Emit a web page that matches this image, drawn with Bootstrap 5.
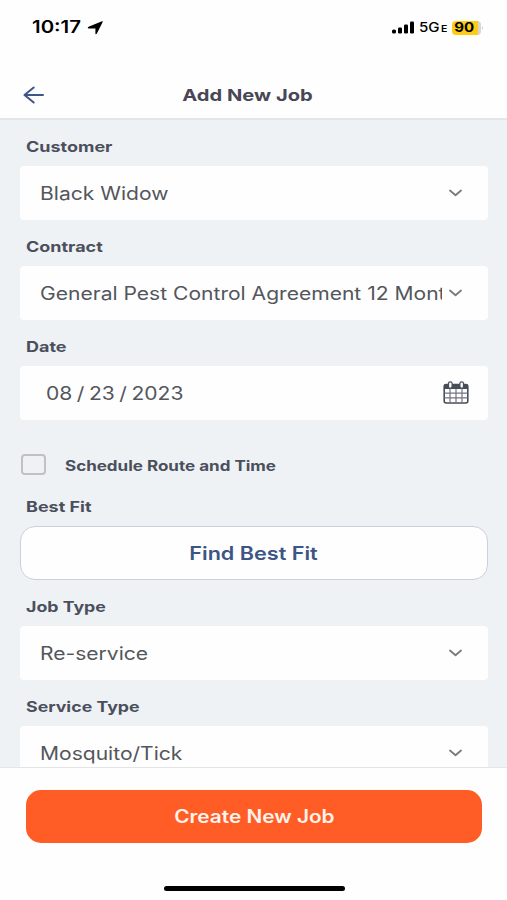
<!DOCTYPE html>
<html lang="en">
<head>
<meta charset="utf-8">
<meta name="viewport" content="width=device-width, initial-scale=1">
<title>Add New Job</title>
<link href="https://cdn.jsdelivr.net/npm/bootstrap@5.3.0/dist/css/bootstrap.min.css" rel="stylesheet">
<style>
  body { font-family: Inter, "Liberation Sans", sans-serif; color: #4b4f5c; height: 900px; background: #fefefe; }
  svg { display: block; flex: none; }
  /* wide lettering: glyphs are stretched horizontally */
  .wide { display: inline-block; white-space: nowrap; transform: scaleX(var(--stretch, 1.2)); transform-origin: 0 50%; }
  .wide-mid { transform-origin: 50% 50%; }
  .status-bar { height: 70px; padding: 0 23px 15px 32px; color: #000; }
  .clock { font-size: 17px; font-weight: 600; width: 51px; padding-top: 1px; }
  .net { font-size: 13px; font-weight: 500; width: 29px; padding-top: 1px; --stretch: 1.16; }
  .net small { font-size: 9px; font-weight: 600; margin-left: -1px; }
  .battery { width: 29px; height: 14px; border-radius: 4px; font-size: 12.5px; font-weight: 700; line-height: 14px; padding-top: 1px; background: linear-gradient(90deg, #fccd12 26px, #d5d5d8 26px); }
  .title-bar { height: 50px; border-bottom: 2px solid #e3e6e9; padding: 1px 23px 0; }
  .title-bar h1 { font-size: 16.5px; font-weight: 700; color: #474757; --stretch: 1.22; padding: 2px 34px 0 0; }
  .form-area { height: 647px; background: #eef2f5; padding: 16px 19.5px 0 20px; }
  .field-label { height: 20px; line-height: 22px; font-size: 14.5px; font-weight: 700; margin: 0 0 10px 6px; display: block; --stretch: 1.24; }
  .label-tight { --stretch: 1.225; }
  .field { height: 53.5px; margin-bottom: 16.5px; background: #fefefe; border-radius: 4px; padding: 0 26px 0 20px; font-size: 18px; color: #53565c; --stretch: 1.17; }
  .field-text { width: 402px; overflow: hidden; padding-top: 2px; }
  .date-field { padding: 0 19px 0 26px; }
  .date-text { word-spacing: -1.2px; padding-top: 2px; }
  .check-row { height: 57px; margin-bottom: 3px; gap: 19px; padding: 0 0 0 1px; }
  .check-row .form-check-input { width: 25px; height: 21px; margin: 0; background: #eff2f4; border: 2px solid #bfc1c4; border-radius: 4px; }
  .check-label { font-size: 14px; font-weight: 700; --stretch: 1.215; padding-top: 1px; }
  .btn-fit { height: 53.5px; margin-bottom: 16.5px; background: #fefefe; border: 1px solid #c9cfe0; border-radius: 15px; font-size: 18px; font-weight: 600; color: #3c5584; padding-top: 8px; }
  .action-bar { height: 133px; border-top: 1px solid #e3e6e9; padding: 22px 25px 9px 26px; }
  .btn-create { height: 53px; background: #ff5c26; border: 0; border-radius: 15px; font-size: 18px; font-weight: 600; color: #fff3ec; --stretch: 1.155; }
  .home-bar { width: 181px; height: 5px; background: #000; }
</style>
</head>
<body class="d-flex flex-column overflow-hidden">
<div class="status-bar d-flex align-items-center justify-content-between">
  <div class="d-flex align-items-center">
    <div class="clock"><span class="wide">10:17</span></div>
    <svg width="17" height="14" viewBox="0 0 17 14" class="ms-1"><path d="M15.8.7 9.9 12.6Q8.8 14 8.4 12.4V7.4H1.9Q-.2 6.9 1.6 5.7L14.4.4Q16.1-.1 15.8.7Z"/></svg>
  </div>
  <div class="d-flex align-items-center">
    <svg width="24" height="13" viewBox="0 0 24 13"><rect x="1" y="8.5" width="4" height="4" rx="1.6"/><rect x="7" y="6.5" width="4" height="6" rx="1.3"/><rect x="13" y="3.5" width="4" height="9" rx="1.3"/><rect x="19" y=".5" width="4" height="12" rx="1.3"/></svg>
    <div class="net ms-1"><span class="wide">5G<small> E</small></span></div>
    <div class="battery d-flex align-items-center justify-content-center ms-1 pe-1"><span class="wide wide-mid">90</span></div>
    <svg width="3" height="6" viewBox="0 0 3 6"><path d="M1 1Q3 3 1 5Z" fill="#ccc"/></svg>
  </div>
</div>
<header class="title-bar d-flex align-items-center">
  <svg width="21" height="18" viewBox="0 0 21 18" fill="none" stroke="#3b568b" stroke-width="2" stroke-linecap="round" stroke-linejoin="round"><path d="M20 9H1.5M10.7 1.5 1.5 9l9.2 7.5"/></svg>
  <h1 class="flex-grow-1 text-center mb-0"><span class="wide wide-mid">Add New Job</span></h1>
</header>
<main class="form-area overflow-hidden">
  <label class="field-label"><span class="wide">Customer</span></label>
  <div class="field d-flex align-items-center">
    <div class="field-text"><span class="wide">Black Widow</span></div>
    <svg class="ms-auto" width="13" height="8" viewBox="0 0 13 8" fill="none" stroke="#777a7e" stroke-width="1.8" stroke-linecap="round" stroke-linejoin="round"><path d="m1 1.5 5.5 4.7L12 1.5"/></svg>
  </div>
  <label class="field-label"><span class="wide">Contract</span></label>
  <div class="field d-flex align-items-center">
    <div class="field-text"><span class="wide">General Pest Control Agreement 12 Month</span></div>
    <svg class="ms-auto" width="13" height="8" viewBox="0 0 13 8" fill="none" stroke="#777a7e" stroke-width="1.8" stroke-linecap="round" stroke-linejoin="round"><path d="m1 1.5 5.5 4.7L12 1.5"/></svg>
  </div>
  <label class="field-label"><span class="wide">Date</span></label>
  <div class="field date-field d-flex align-items-center justify-content-between">
    <span class="wide date-text">08 / 23 / 2023</span>
    <svg width="26" height="23" viewBox="0 0 26 23"><rect x="1.2" y="3.5" width="23.6" height="18.5" rx="2" fill="#fefefe" stroke="#484c59" stroke-width="1.6"/><path d="M1 8V4.5Q1 3 3 3h20q2 0 2 1.5V8Z" fill="#484c59"/><path d="M1.5 12.2h23M1.5 16.8h23M7 8v14M13 8v14M19 8v14" stroke="#737681" stroke-width="1.2"/><rect x="5.5" y=".8" width="3.6" height="6.4" rx="1.8" fill="#fefefe" stroke="#484c59" stroke-width="1.2"/><rect x="16.9" y=".8" width="3.6" height="6.4" rx="1.8" fill="#fefefe" stroke="#484c59" stroke-width="1.2"/></svg>
  </div>
  <div class="check-row d-flex align-items-center">
    <input class="form-check-input" type="checkbox" id="route">
    <label class="check-label" for="route"><span class="wide">Schedule Route and Time</span></label>
  </div>
  <label class="field-label"><span class="wide">Best Fit</span></label>
  <button class="btn btn-fit w-100 d-flex align-items-center justify-content-center" type="button"><span class="wide wide-mid">Find Best Fit</span></button>
  <label class="field-label label-tight"><span class="wide">Job Type</span></label>
  <div class="field d-flex align-items-center">
    <div class="field-text"><span class="wide">Re-service</span></div>
    <svg class="ms-auto" width="13" height="8" viewBox="0 0 13 8" fill="none" stroke="#777a7e" stroke-width="1.8" stroke-linecap="round" stroke-linejoin="round"><path d="m1 1.5 5.5 4.7L12 1.5"/></svg>
  </div>
  <label class="field-label label-tight"><span class="wide">Service Type</span></label>
  <div class="field d-flex align-items-center">
    <div class="field-text"><span class="wide">Mosquito/Tick</span></div>
    <svg class="ms-auto" width="13" height="8" viewBox="0 0 13 8" fill="none" stroke="#777a7e" stroke-width="1.8" stroke-linecap="round" stroke-linejoin="round"><path d="m1 1.5 5.5 4.7L12 1.5"/></svg>
  </div>
</main>
<footer class="action-bar d-flex flex-column align-items-center justify-content-between">
  <button class="btn btn-create w-100 d-flex align-items-center justify-content-center" type="button"><span class="wide wide-mid">Create New Job</span></button>
  <div class="home-bar rounded-pill"></div>
</footer>
</body>
</html>
